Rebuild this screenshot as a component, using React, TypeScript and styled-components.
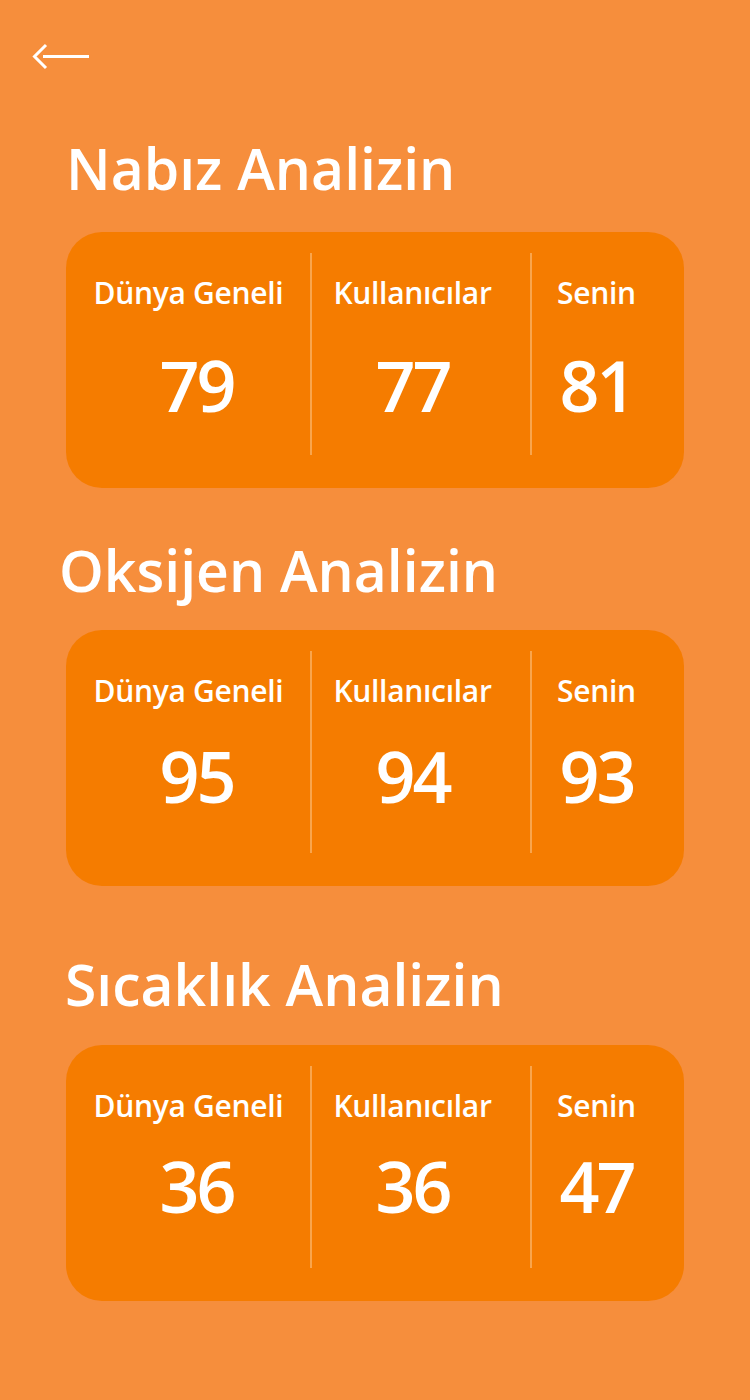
import React from 'react';
import styled, { createGlobalStyle } from 'styled-components';

const GlobalStyle = createGlobalStyle`
  html, body {
    margin: 0;
    padding: 0;
    background: #f68e3c;
  }
  body {
    font-family: "Open Sans", "Noto Sans", sans-serif;
  }
`;

interface StatColumn {
  label: string;
  value: number;
}

interface Analysis {
  id: string;
  title: string;
  indent: number; // left offset of the heading
  spaceAbove: number;
  spaceBelow: number;
  valueGap: number; // room between label and big number
  columns: StatColumn[];
}

const analyses: Analysis[] = [
  {
    id: 'nabiz',
    title: 'Nabız Analizin',
    indent: 66,
    spaceAbove: 0,
    spaceBelow: 35,
    valueGap: 42,
    columns: [
      { label: 'Dünya Geneli', value: 79 },
      { label: 'Kullanıcılar', value: 77 },
      { label: 'Senin', value: 81 },
    ],
  },
  {
    id: 'oksijen',
    title: 'Oksijen Analizin',
    indent: 59,
    spaceAbove: 54,
    spaceBelow: 31,
    valueGap: 35,
    columns: [
      { label: 'Dünya Geneli', value: 95 },
      { label: 'Kullanıcılar', value: 94 },
      { label: 'Senin', value: 93 },
    ],
  },
  {
    id: 'sicaklik',
    title: 'Sıcaklık Analizin',
    indent: 65,
    spaceAbove: 70,
    spaceBelow: 32,
    valueGap: 30,
    columns: [
      { label: 'Dünya Geneli', value: 36 },
      { label: 'Kullanıcılar', value: 36 },
      { label: 'Senin', value: 47 },
    ],
  },
];

// per-column nudges so the text sits where it does in the design
const columnTweaks = [
  { padRight: 0, valueShift: 16 },
  { padRight: 18, valueShift: 0 },
  { padRight: 23, valueShift: 0 },
];

const Page = styled.div`
  min-height: 1400px;
  width: 750px;
  box-sizing: border-box;
  background: #f68e3c;
  color: #ffffff;
  padding: 42px 0 0 0;
`;

const BackButton = styled.button`
  display: block;
  background: none;
  border: none;
  padding: 0;
  margin: 0 0 68px 31px;
  width: 60px;
  height: 30px;
  cursor: pointer;
`;

const Section = styled.section<{ $spaceAbove: number }>`
  margin-top: ${(p) => p.$spaceAbove}px;
`;

const Title = styled.h2<{ $indent: number; $spaceBelow: number }>`
  margin: 0 0 ${(p) => p.$spaceBelow}px ${(p) => p.$indent}px;
  font-size: 57px;
  line-height: 1;
  font-weight: 600;
  letter-spacing: 0;
  white-space: nowrap;
`;

const Card = styled.div`
  margin-left: 66px;
  width: 618px;
  height: 256px;
  box-sizing: border-box;
  padding: 21px 0 33px;
  background: #f57c00;
  border-radius: 36px;
  display: grid;
  grid-template-columns: 245px 220px 153px;
`;

const Column = styled.div<{ $first: boolean; $padRight: number; $valueGap: number }>`
  display: flex;
  flex-direction: column;
  align-items: center;
  padding-top: 25px;
  padding-right: ${(p) => p.$padRight}px;
  border-left: ${(p) => (p.$first ? 'none' : '2px solid #f9a54c')};
  margin-left: ${(p) => (p.$first ? 0 : -1)}px;
  gap: ${(p) => p.$valueGap}px;
`;

const Label = styled.div`
  font-size: 30px;
  line-height: 1;
  font-weight: 600;
  letter-spacing: -0.3px;
  white-space: nowrap;
`;

const Value = styled.div<{ $shift: number }>`
  font-size: 70px;
  line-height: 1;
  font-weight: 600;
  letter-spacing: -3px;
  margin-left: ${(p) => p.$shift}px;
`;

const BackArrow: React.FC = () => (
  <svg width="60" height="30" viewBox="0 0 60 30" fill="none">
    <path d="M12 14.5 H58" stroke="#fff" strokeWidth="3" />
    <path d="M15 3 L3.5 14.5 L15 26" stroke="#fff" strokeWidth="3" strokeLinejoin="miter" />
  </svg>
);

const App: React.FC = () => (
  <>
    <GlobalStyle />
    <Page>
      <BackButton aria-label="Geri">
        <BackArrow />
      </BackButton>
      {analyses.map((a) => (
        <Section key={a.id} $spaceAbove={a.spaceAbove}>
          <Title $indent={a.indent} $spaceBelow={a.spaceBelow}>
            {a.title}
          </Title>
          <Card>
            {a.columns.map((col, i) => (
              <Column
                key={col.label}
                $first={i === 0}
                $padRight={columnTweaks[i].padRight}
                $valueGap={a.valueGap}
              >
                <Label>{col.label}</Label>
                <Value $shift={columnTweaks[i].valueShift}>{col.value}</Value>
              </Column>
            ))}
          </Card>
        </Section>
      ))}
    </Page>
  </>
);

export default App;
